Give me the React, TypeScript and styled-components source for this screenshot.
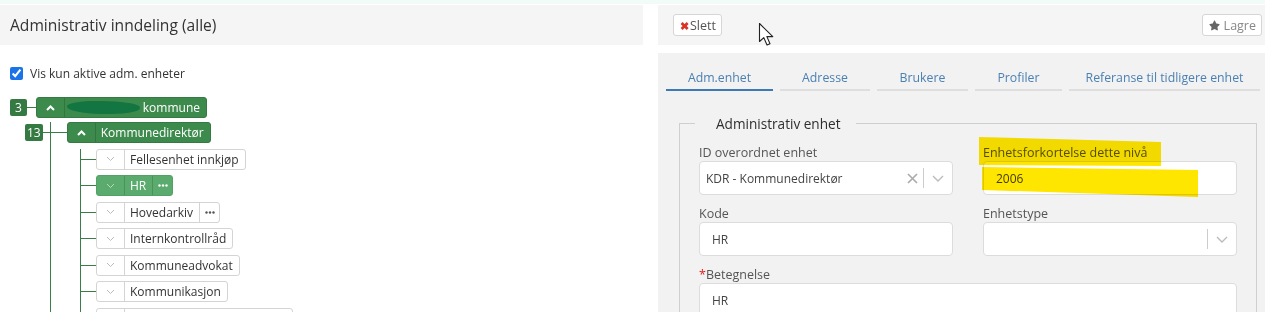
import styled, { createGlobalStyle } from 'styled-components';
import { FaStar } from 'react-icons/fa';

const GlobalStyle = createGlobalStyle`
  html, body {
    margin: 0;
    padding: 0;
    background: #fff;
    font-family: 'Open Sans', 'Liberation Sans', sans-serif;
    color: #333;
  }
  * { box-sizing: border-box; }
`;

const Page = styled.div`
  width: 1265px;
  height: 312px;
  overflow: hidden;
  border-top: 4px solid #f1fbf7;
  padding-top: 1px;
  display: flex;
  align-items: flex-start;
  gap: 15px;
  position: relative;
`;

const LeftPanel = styled.div`
  width: 643px;
  flex-shrink: 0;
`;

const PanelHeader = styled.div`
  height: 40px;
  background: #f5f5f5;
  display: flex;
  align-items: center;
  padding-left: 10px;
  font-size: 15.6px;
  color: #333;
`;

const CheckRow = styled.label`
  display: flex;
  align-items: center;
  gap: 7px;
  margin: 20px 0 0 10px;
  font-size: 12px;
  color: #333;

  input {
    margin: 0;
    width: 13px;
    height: 13px;
    accent-color: #1a73e8;
  }
`;

const Tree = styled.div`
  margin-top: 15px;
`;

const SubTree = styled.div<{ $lineX: number }>`
  position: relative;

  &::before {
    content: '';
    position: absolute;
    left: ${p => p.$lineX}px;
    top: 0;
    bottom: -40px;
    width: 1px;
    background: #3b7d47;
  }
`;

const NodeRow = styled.div<{ $indent: number; $gap?: number }>`
  position: relative;
  z-index: 1;
  display: flex;
  align-items: center;
  height: 21px;
  margin-top: ${p => p.$gap ?? 5.5}px;
  padding-left: ${p => p.$indent}px;
`;

const Badge = styled.span`
  min-width: 17px;
  height: 17px;
  padding: 0 2px;
  background: #357a43;
  color: #fff;
  font-size: 12px;
  display: flex;
  align-items: center;
  justify-content: center;
  border-radius: 2px;
`;

const Connector = styled.span<{ $w: number }>`
  width: ${p => p.$w}px;
  height: 1px;
  background: #3b7d47;
  flex-shrink: 0;
`;

const NodeButton = styled.div<{ $variant: 'dark' | 'light' | 'plain' }>`
  display: flex;
  height: 21px;
  border-radius: 3px;
  font-size: 12px;
  overflow: hidden;
  background: ${p => (p.$variant === 'dark' ? '#3d8a4d' : p.$variant === 'light' ? '#5aab6d' : '#fff')};
  border: 1px solid ${p => (p.$variant === 'dark' ? '#357a43' : p.$variant === 'light' ? '#52a165' : '#d4d4d4')};
  color: ${p => (p.$variant === 'plain' ? '#333' : '#fff')};
`;

const NodeCell = styled.span<{ $first?: boolean; $dark?: boolean; $width?: number }>`
  display: flex;
  align-items: center;
  justify-content: ${p => (p.$width ? 'center' : 'flex-start')};
  ${p => (p.$width ? `width: ${p.$width}px;` : 'padding: 0 6px 0 5px;')}
  border-left: ${p => (p.$first ? 'none' : `1px solid ${p.$dark ? 'rgba(0,0,0,0.15)' : '#d4d4d4'}`)};
  white-space: nowrap;
`;

const Scribble = styled.span`
  display: inline-block;
  width: 78px;
  height: 13px;
  margin-right: 3px;
  margin-left: -3px;
  background: #137541;
  border-radius: 50% 45% 55% 50%;
  transform: rotate(1.5deg);
`;

const Chevron = ({ up, color }: { up?: boolean; color: string }) => (
  <svg width="9" height="6" viewBox="0 0 9 6">
    <path
      d={up ? 'M1 5 L4.5 1.5 L8 5' : 'M1 1 L4.5 4.5 L8 1'}
      fill="none"
      stroke={color}
      strokeWidth={up ? 2 : 1}
    />
  </svg>
);

const Dots = ({ color }: { color: string }) => (
  <svg width="10" height="3" viewBox="0 0 10 3">
    <circle cx="1.5" cy="1.5" r="1.2" fill={color} />
    <circle cx="5" cy="1.5" r="1.2" fill={color} />
    <circle cx="8.5" cy="1.5" r="1.2" fill={color} />
  </svg>
);

type Child = { name: string; variant?: 'light'; dots?: boolean; width?: number };

const children: Child[] = [
  { name: 'Fellesenhet innkjøp' },
  { name: 'HR', variant: 'light', dots: true },
  { name: 'Hovedarkiv', dots: true },
  { name: 'Internkontrollråd' },
  { name: 'Kommuneadvokat' },
  { name: 'Kommunikasjon' },
  { name: '', width: 168 },
];

const RightPanel = styled.div`
  flex: 1;
  display: flex;
  flex-direction: column;
`;

const Toolbar = styled.div`
  flex-shrink: 0;
  height: 40px;
  background: #f5f5f5;
  display: flex;
  align-items: center;
  justify-content: space-between;
  padding: 0 3px 0 15px;
`;

const ToolButton = styled.button<{ $muted?: boolean }>`
  height: 22px;
  padding: 0 5px 0 6px;
  background: #fff;
  border: 1px solid #d6d6d6;
  border-radius: 3px;
  font-family: inherit;
  font-size: 12.5px;
  color: ${p => (p.$muted ? '#888' : '#555')};
  display: flex;
  align-items: center;
  gap: ${p => (p.$muted ? 4 : 1)}px;
`;

const RedX = styled.span`
  color: #d9332a;
  font-size: 11px;
  font-weight: bold;
`;

const Cursor = styled.svg`
  position: absolute;
  left: 758px;
  top: 18px;
`;

const TabPanel = styled.div`
  flex-shrink: 0;
  margin-top: 8px;
  background: #f2f2f2;
  padding: 12px 3px 0 8px;
  height: 260px;
`;

const Tabs = styled.div`
  display: flex;
  gap: 7px;
`;

const Tab = styled.div<{ $active?: boolean; $w: number }>`
  width: ${p => p.$w}px;
  height: 26px;
  display: flex;
  align-items: center;
  justify-content: center;
  font-size: 12.3px;
  color: #4b80b3;
  border-bottom: 2px solid ${p => (p.$active ? '#3d79b5' : '#dedede')};
`;

const Fieldset = styled.fieldset`
  margin: 23px 5px 0 13px;
  padding: 12px 19px 40px 19px;
  border: 1px solid #cfcfcf;
  border-bottom: none;
  min-width: 0;

  legend {
    margin-left: -4px;
    padding: 0 15px 0 21px;
    font-size: 13.6px;
    color: #2f2f2f;
  }
`;

const FieldGrid = styled.div`
  position: relative;
  display: grid;
  grid-template-columns: 254px 254px;
  column-gap: 30px;
  row-gap: 11px;
`;

const Field = styled.div<{ $wide?: boolean }>`
  ${p => (p.$wide ? 'grid-column: 1 / span 2;' : '')}
  display: flex;
  flex-direction: column;
`;

const Label = styled.div`
  font-size: 12.5px;
  color: #555;
  line-height: 16px;
`;

const Required = styled.span`
  color: #e02020;
`;

const Input = styled.div`
  height: 34px;
  background: #fff;
  border: 1px solid #dcdcdc;
  border-radius: 4px;
  display: flex;
  align-items: center;
  padding-left: 12px;
  font-size: 12px;
  color: #444;
`;

const SelectBox = styled(Input)`
  padding-left: 6px;
  padding-right: 0;
`;

const SelectValue = styled.span`
  flex: 1;
`;

const SelectIcon = styled.span<{ $w?: number }>`
  width: ${p => p.$w ?? 22}px;
  display: flex;
  align-items: center;
  justify-content: center;
`;

const SelectSep = styled.span`
  width: 1px;
  height: 20px;
  background: #ccc;
`;

const Highlight = styled.svg`
  position: absolute;
  left: 0;
  top: 0;
  overflow: visible;
  pointer-events: none;
  mix-blend-mode: multiply;
`;

const Caret = () => (
  <svg width="12" height="7" viewBox="0 0 12 7">
    <path d="M1 1 L6 6 L11 1" fill="none" stroke="#bbb" strokeWidth="1.4" />
  </svg>
);

const ClearX = () => (
  <svg width="11" height="11" viewBox="0 0 11 11">
    <path d="M1 1 L10 10 M10 1 L1 10" stroke="#aaa" strokeWidth="1.6" />
  </svg>
);

export default function App() {
  return (
    <>
      <GlobalStyle />
      <Page>
        <LeftPanel>
          <PanelHeader>Administrativ inndeling (alle)</PanelHeader>
          <CheckRow>
            <input type="checkbox" defaultChecked readOnly />
            Vis kun aktive adm. enheter
          </CheckRow>
          <Tree>
            <NodeRow $indent={10} $gap={0}>
              <Badge>3</Badge>
              <Connector $w={9} />
              <NodeButton $variant="dark">
                <NodeCell $first $width={27}>
                  <Chevron up color="#fff" />
                </NodeCell>
                <NodeCell $dark style={{ width: 142 }}>
                  <Scribble />
                  kommune
                </NodeCell>
              </NodeButton>
            </NodeRow>
            <SubTree $lineX={49.5}>
              <NodeRow $indent={25} $gap={4}>
                <Badge>13</Badge>
                <Connector $w={24} />
                <NodeButton $variant="dark">
                  <NodeCell $first $width={27}>
                    <Chevron up color="#fff" />
                  </NodeCell>
                  <NodeCell $dark>Kommunedirektør</NodeCell>
                </NodeButton>
              </NodeRow>
              <SubTree $lineX={79.5}>
                {children.map((c, i) => (
                  <NodeRow key={i} $indent={80}>
                    <Connector $w={16} />
                    <NodeButton $variant={c.variant ?? 'plain'}>
                      <NodeCell $first $width={27}>
                        <Chevron color={c.variant ? 'rgba(255,255,255,0.55)' : '#bbb'} />
                      </NodeCell>
                      <NodeCell $dark={!!c.variant} style={c.width ? { width: c.width } : undefined}>
                        {c.name}
                      </NodeCell>
                      {c.dots && (
                        <NodeCell $dark={!!c.variant} $width={20}>
                          <Dots color={c.variant ? '#fff' : '#555'} />
                        </NodeCell>
                      )}
                    </NodeButton>
                  </NodeRow>
                ))}
              </SubTree>
            </SubTree>
          </Tree>
        </LeftPanel>

        <RightPanel>
          <Toolbar>
            <ToolButton>
              <RedX>✖</RedX>Slett
            </ToolButton>
            <ToolButton $muted>
              <FaStar size={11} color="#666" />
              Lagre
            </ToolButton>
          </Toolbar>
          <TabPanel>
            <Tabs>
              <Tab $active $w={107}>Adm.enhet</Tab>
              <Tab $w={90}>Adresse</Tab>
              <Tab $w={91}>Brukere</Tab>
              <Tab $w={87}>Profiler</Tab>
              <Tab $w={191}>Referanse til tidligere enhet</Tab>
            </Tabs>
            <Fieldset>
              <legend>Administrativ enhet</legend>
              <FieldGrid>
                <Field>
                  <Label>ID overordnet enhet</Label>
                  <SelectBox>
                    <SelectValue>KDR - Kommunedirektør</SelectValue>
                    <SelectIcon>
                      <ClearX />
                    </SelectIcon>
                    <SelectSep />
                    <SelectIcon $w={28}>
                      <Caret />
                    </SelectIcon>
                  </SelectBox>
                </Field>
                <Field>
                  <Label>Enhetsforkortelse dette nivå</Label>
                  <Input>2006</Input>
                </Field>
                <Field>
                  <Label>Kode</Label>
                  <Input>HR</Input>
                </Field>
                <Field>
                  <Label>Enhetstype</Label>
                  <SelectBox>
                    <SelectValue />
                    <SelectSep />
                    <SelectIcon $w={28}>
                      <Caret />
                    </SelectIcon>
                  </SelectBox>
                </Field>
                <Field $wide>
                  <Label>
                    <Required>*</Required>Betegnelse
                  </Label>
                  <Input>HR</Input>
                </Field>
                <Highlight width="538" height="60" viewBox="0 0 538 60">
                  <polygon points="280,-8 462,-3 462,21 280,20" fill="#ffe600" />
                  <polygon points="283,22 499,25 499,52 283,45" fill="#ffe600" />
                </Highlight>
              </FieldGrid>
            </Fieldset>
          </TabPanel>
        </RightPanel>

        <Cursor width="19" height="25" viewBox="0 0 19 25">
          <path
            d="M1.5 1.5 L1.5 19.5 L5.8 15.6 L9 23 L12 21.7 L8.9 14.6 L14.8 14.6 Z"
            fill="#fff"
            stroke="#222"
            strokeWidth="1.1"
            strokeLinejoin="round"
          />
        </Cursor>
      </Page>
    </>
  );
}
